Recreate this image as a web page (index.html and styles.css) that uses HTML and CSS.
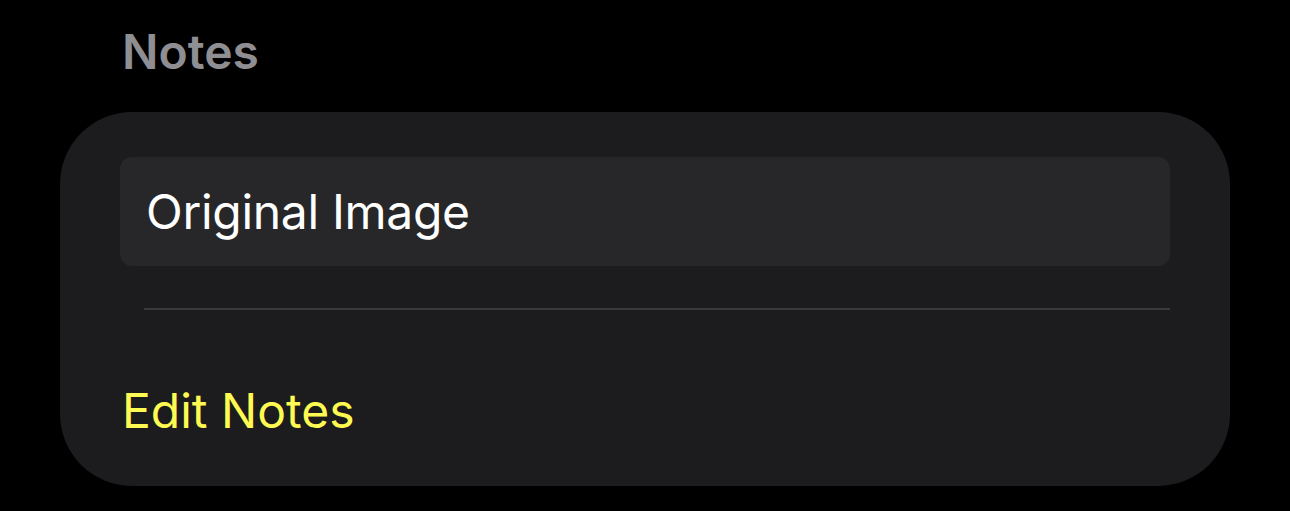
FILE: index.html
```html
<!DOCTYPE html>
<html lang="en">
<head>
<meta charset="UTF-8">
<meta name="viewport" content="width=device-width, initial-scale=1.0">
<title>Notes</title>
<link rel="stylesheet" href="styles.css">
</head>
<body>
<div class="page">
  <h2 class="section-title">Notes</h2>
  <div class="card">
    <div class="note-field">Original Image</div>
    <div class="divider"></div>
    <a class="edit-link" href="#">Edit Notes</a>
  </div>
</div>
</body>
</html>
```

FILE: styles.css
```css
body {
  margin: 0;
  padding: 0;
  background-color: #000;
  font-family: Inter, "Noto Sans", sans-serif;
}

.page {
  display: flex;
  flex-direction: column;
  padding: 26px 60px 0 60px;
}

.section-title {
  margin: 0 0 34px 62px;
  font-size: 48px;
  font-weight: 600;
  line-height: 52px;
  color: #8e8e93;
}

.card {
  display: flex;
  flex-direction: column;
  width: 1170px;
  box-sizing: border-box;
  padding: 45px 60px 0 60px;
  height: 374px;
  background-color: #1c1c1e;
  border-radius: 72px;
}

.note-field {
  display: flex;
  align-items: center;
  height: 109px;
  padding-left: 26px;
  background-color: #272729;
  border-radius: 12px;
  font-size: 48px;
  letter-spacing: -0.3px;
  color: #fff;
}

.divider {
  height: 2px;
  margin: 42px 0 0 24px;
  background-color: #3a3a3c;
}

.edit-link {
  margin: 71px 0 0 2px;
  font-size: 48px;
  line-height: 60px;
  color: #fefa52;
  text-decoration: none;
}
```
